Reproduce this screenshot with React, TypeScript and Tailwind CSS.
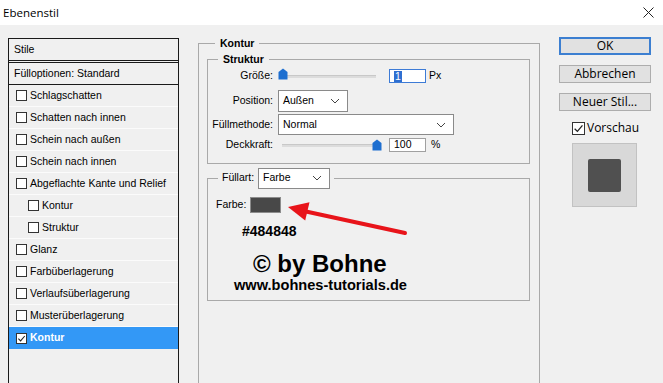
import type { ReactNode } from 'react'

const UI = { fontFamily: '"Liberation Sans", Arial, sans-serif' }
const SEGOE = { fontFamily: '"Open Sans", "Noto Sans", sans-serif' }

const STYLES: { label: string; indent?: boolean }[] = [
  { label: 'Schlagschatten' },
  { label: 'Schatten nach innen' },
  { label: 'Schein nach außen' },
  { label: 'Schein nach innen' },
  { label: 'Abgeflachte Kante und Relief' },
  { label: 'Kontur', indent: true },
  { label: 'Struktur', indent: true },
  { label: 'Glanz' },
  { label: 'Farbüberlagerung' },
  { label: 'Verlaufsüberlagerung' },
  { label: 'Musterüberlagerung' },
]

function Check({ checked = false, size = 11 }: { checked?: boolean; size?: number }) {
  return (
    <span
      className="flex-shrink-0 border border-[#333] bg-white flex items-center justify-center"
      style={{ width: size, height: size }}
    >
      {checked && (
        <svg width={size - 2} height={size - 2} viewBox="0 0 10 10" fill="none">
          <path d="M1.5 5.2 L4 7.6 L8.6 2.2" stroke="#222" strokeWidth="1.2" />
        </svg>
      )}
    </span>
  )
}

function Chevron() {
  return (
    <svg width="10" height="6" viewBox="0 0 10 6" fill="none">
      <path d="M1 1 L5 5 L9 1" stroke="#444" strokeWidth="1" />
    </svg>
  )
}

function Select({ value, width }: { value: string; width: number }) {
  return (
    <div
      className="h-full bg-white border border-[#8a8a8a] flex items-center justify-between pl-[4px] pr-[7px] text-[10.5px] text-black"
      style={{ width }}
    >
      <span>{value}</span>
      <Chevron />
    </div>
  )
}

function Slider({ at }: { at: 'start' | 'end' }) {
  return (
    <div className="relative w-[100px] h-full flex items-center">
      <div className="ml-[4px] w-[94px] h-[3px] bg-[#dcdcdc] border-t border-[#c8c8c8]" />
      <svg
        className={`absolute top-[2px] ${at === 'start' ? 'left-[0px]' : 'left-[94px]'}`}
        width="10"
        height="12"
        viewBox="0 0 10 12"
      >
        <path d="M0.5 4 L5 0.5 L9.5 4 L9.5 11.5 L0.5 11.5 Z" fill="#1e6fd0" />
      </svg>
    </div>
  )
}

function Row({ label, children, h }: { label: string; children: ReactNode; h: string }) {
  return (
    <div className={`flex items-center ${h}`}>
      <span className="w-[66px] text-right text-[10.5px] text-black pr-[1px]">{label}</span>
      <div className="ml-[4px] flex items-center h-full">{children}</div>
    </div>
  )
}

function Button({ children, primary = false }: { children: ReactNode; primary?: boolean }) {
  return (
    <div
      className={`h-[18px] w-[92px] flex items-center justify-center bg-[#e1e1e1] text-[12px] text-black ${
        primary ? 'border-2 border-[#3c7fd1]' : 'border border-[#adadad]'
      }`}
      style={SEGOE}
    >
      {children}
    </div>
  )
}

export default function App() {
  return (
    <div className="relative w-[663px] h-[383px] overflow-hidden bg-[#f0f0f0]" style={UI}>
      {/* title bar */}
      <div className="h-[25px] bg-white flex items-center justify-between pl-[3px] pr-[9px]">
        <span className="text-[11.5px] text-black" style={SEGOE}>Ebenenstil</span>
        <svg width="11" height="11" viewBox="0 0 11 11" fill="none">
          <path d="M0.5 0.5 L10.5 10.5 M10.5 0.5 L0.5 10.5" stroke="#222" strokeWidth="1" />
        </svg>
      </div>

      <div className="flex pl-[8px]">
        {/* styles list */}
        <div className="mt-[13px] w-[171px] h-[400px] border-l border-r border-t border-[#1a1a1a] text-[10.5px] text-black">
          <div className="h-[22px] flex items-center pl-[5px] border-b border-[#1a1a1a]">Stile</div>
          <div className="h-[23px] flex items-center pl-[5px] border-t border-b border-[#1a1a1a] mt-[1px]">
            Fülloptionen: Standard
          </div>
          {STYLES.map((s) => (
            <div
              key={s.label}
              className={`h-[22px] flex items-center gap-[3px] border-b border-[#fbfbfb] ${s.indent ? 'pl-[19px]' : 'pl-[7px]'}`}
            >
              <Check />
              <span>{s.label}</span>
            </div>
          ))}
          <div className="h-[22px] flex items-center gap-[3px] pl-[7px] bg-[#3398f6] text-white font-bold">
            <Check checked />
            <span>Kontur</span>
          </div>
        </div>

        {/* Kontur group */}
        <fieldset className="mt-[12px] ml-[19px] w-[342px] h-[400px] border border-[#a9a9a9] pl-[8px] pr-[9px]">
          <legend className="ml-[8px] px-[5px] text-[10.5px] leading-[13px] font-bold text-black">Kontur</legend>

          <fieldset className="mt-[3px] border border-[#a9a9a9] pb-[10px]">
            <legend className="ml-[10px] px-[5px] text-[10.5px] leading-[13px] font-bold text-black">Struktur</legend>
            <Row label="Größe:" h="h-[20px]">
              <Slider at="start" />
              <div className="ml-[11px] w-[37px] h-[14px] bg-white border border-[#3d7bd6] flex items-center pl-[4px]">
                <span className="bg-[#2f6fd1] text-white text-[10.5px] leading-[11px] px-[1px]">1</span>
              </div>
              <span className="ml-[3px] text-[10.5px]">Px</span>
            </Row>
            <Row label="Position:" h="h-[22px] mt-[4px]">
              <Select value="Außen" width={70} />
            </Row>
            <Row label="Füllmethode:" h="h-[21px] mt-[2px]">
              <Select value="Normal" width={176} />
            </Row>
            <Row label="Deckkraft:" h="h-[16px] mt-[2px]">
              <Slider at="end" />
              <div className="ml-[11px] w-[37px] h-[14px] bg-white border border-[#a0a0a0] flex items-center pl-[4px] text-[10.5px]">
                100
              </div>
              <span className="ml-[5px] text-[10.5px]">%</span>
            </Row>
          </fieldset>

          <fieldset className="relative mt-[3px] border border-[#a9a9a9] pb-[6px]">
            <legend className="ml-[10px] px-[4px] h-[22px] flex items-center gap-[4px] text-[10.5px] text-black">
              <span>Füllart:</span>
              <div className="h-[21px]">
                <Select value="Farbe" width={72} />
              </div>
            </legend>
            <div className="mt-[8px] h-[16px] flex items-center pl-[8px] text-[10.5px] text-black">
              <span>Farbe:</span>
              <span className="ml-[4px] w-[31px] h-[16px] bg-[#484848] border border-[#8c8c8c]" />
            </div>
            <div className="mt-[10px] ml-[34px] text-[14px] leading-[16px] font-bold text-black">#484848</div>
            <div className="mt-[11px] ml-[45px] text-[24px] leading-[27px] font-bold text-black">© by Bohne</div>
            <div className="ml-[26px] text-[14.6px] leading-[17px] font-bold text-black">www.bohnes-tutorials.de</div>
          </fieldset>
        </fieldset>

        {/* right column */}
        <div className="mt-[12px] ml-[19px] flex flex-col items-start">
          <Button primary>OK</Button>
          <div className="mt-[10px]">
            <Button>Abbrechen</Button>
          </div>
          <div className="mt-[10px]">
            <Button>Neuer Stil...</Button>
          </div>
          <div className="mt-[8px] ml-[13px] flex items-center gap-[2px] text-[12px] text-black" style={SEGOE}>
            <Check checked size={13} />
            <span>Vorschau</span>
          </div>
          <div className="mt-[6px] ml-[13px] w-[65px] h-[64px] bg-[#d8d8d8] border border-[#c2c2c2] flex items-center justify-center">
            <div className="w-[33px] h-[33px] rounded-[2px] bg-[#505050]" />
          </div>
        </div>
      </div>

      {/* red annotation arrow */}
      <svg className="absolute left-[280px] top-[195px]" width="130" height="45" viewBox="0 0 130 45">
        <path d="M26 16.5 L125 38" stroke="#e8141a" strokeWidth="4" strokeLinecap="round" />
        <path d="M8 12 L29.5 7.3 L25.2 25.4 Z" fill="#e8141a" />
      </svg>
    </div>
  )
}
